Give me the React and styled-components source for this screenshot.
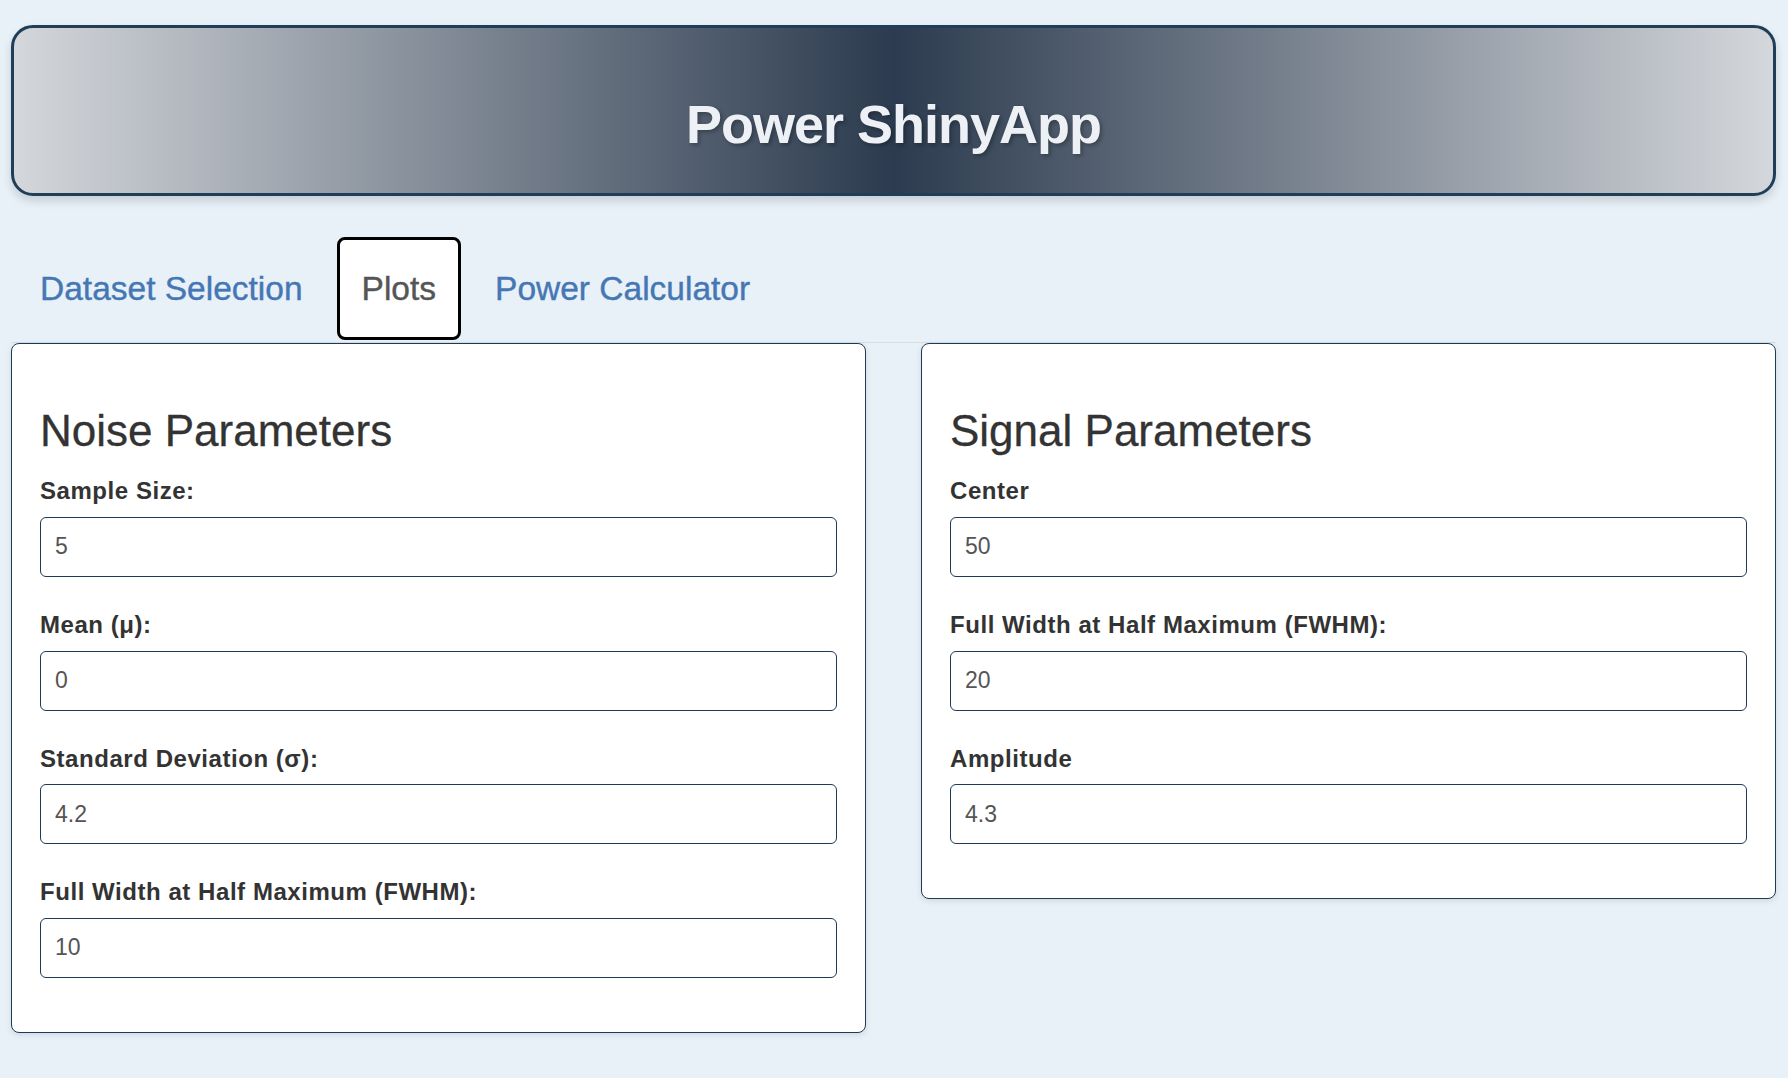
import React from 'react'
import styled, { createGlobalStyle } from 'styled-components'

const GlobalStyle = createGlobalStyle`
  body {
    margin: 0;
    background: #e8f0f8;
    font-family: "Liberation Sans", Arial, Helvetica, sans-serif;
    color: #333;
  }
`

const Page = styled.div`
  padding: 25px 12px 40px 11px;
`

const Header = styled.header`
  box-sizing: border-box;
  height: 171px;
  padding-top: 26px;
  display: flex;
  align-items: center;
  justify-content: center;
  border: 3px solid #213e58;
  border-radius: 22px;
  background: linear-gradient(to right, #d4d7db 0%, #2c3b4f 50%, #d4d7db 100%);
  box-shadow: 0 5px 10px rgba(0, 0, 0, 0.14);
`

const Title = styled.h1`
  margin: 0;
  font-size: 54px;
  line-height: 1;
  font-weight: 700;
  letter-spacing: -1px;
  color: #edf1f6;
  text-shadow: 2px 2px 4px rgba(0, 0, 0, 0.3);
`

const TabBar = styled.nav`
  display: flex;
  align-items: flex-end;
  margin-top: 41px;
  padding: 0 0 2px 4px;
  border-bottom: 1px solid #d9dee4;
`

const Tab = styled.a`
  box-sizing: border-box;
  height: 103px;
  display: flex;
  align-items: center;
  padding: 0 ${p => (p.$active ? 22 : 25)}px;
  margin-right: 9px;
  font-size: 33.5px;
  -webkit-text-stroke: 0.4px currentColor;
  text-decoration: none;
  cursor: pointer;
  color: ${p => (p.$active ? '#555' : '#4577b4')};
  background: ${p => (p.$active ? '#fff' : 'transparent')};
  border: ${p => (p.$active ? '3px solid #000' : 'none')};
  border-radius: 8px;
`

const Columns = styled.div`
  display: grid;
  grid-template-columns: 1fr 1fr;
  column-gap: 55px;
  align-items: start;
`

const Card = styled.section`
  background: #fff;
  border: 1px solid #1f3a56;
  border-radius: 8px;
  padding: 28px 28px 20px;
  box-shadow: 0 2px 6px rgba(0, 0, 0, 0.1);
`

const CardTitle = styled.h3`
  margin: 35px 0 22px;
  font-size: 44px;
  line-height: 1.1;
  font-weight: 400;
  -webkit-text-stroke: 0.3px currentColor;
  color: #333;
`

const Field = styled.div`
  margin-bottom: 34px;
`

const Label = styled.label`
  display: block;
  margin-bottom: 12px;
  font-size: 24px;
  line-height: 1.15;
  font-weight: 700;
  letter-spacing: 0.55px;
  color: #333;
`

const Input = styled.input`
  box-sizing: border-box;
  display: block;
  width: 100%;
  height: 60px;
  padding: 0 14px;
  font-family: inherit;
  font-size: 23px;
  color: #555;
  background: #fff;
  border: 1px solid #1f3a56;
  border-radius: 6px;
  outline: none;
`

const tabs = ['Dataset Selection', 'Plots', 'Power Calculator']

const noise = [
  { label: 'Sample Size:', value: '5' },
  { label: 'Mean (μ):', value: '0' },
  { label: 'Standard Deviation (σ):', value: '4.2' },
  { label: 'Full Width at Half Maximum (FWHM):', value: '10' },
]

const signal = [
  { label: 'Center', value: '50' },
  { label: 'Full Width at Half Maximum (FWHM):', value: '20' },
  { label: 'Amplitude', value: '4.3' },
]

const ParamCard = ({ title, fields }) => (
  <Card>
    <CardTitle>{title}</CardTitle>
    {fields.map((f, i) => (
      <Field key={i}>
        <Label>{f.label}</Label>
        <Input type="number" defaultValue={f.value} />
      </Field>
    ))}
  </Card>
)

const App = () => {
  return (
    <Page>
      <GlobalStyle />
      <Header>
        <Title>Power ShinyApp</Title>
      </Header>
      <TabBar>
        {tabs.map(t => (
          <Tab key={t} $active={t === 'Plots'}>{t}</Tab>
        ))}
      </TabBar>
      <Columns>
        <ParamCard title="Noise Parameters" fields={noise} />
        <ParamCard title="Signal Parameters" fields={signal} />
      </Columns>
    </Page>
  )
}

export default App
